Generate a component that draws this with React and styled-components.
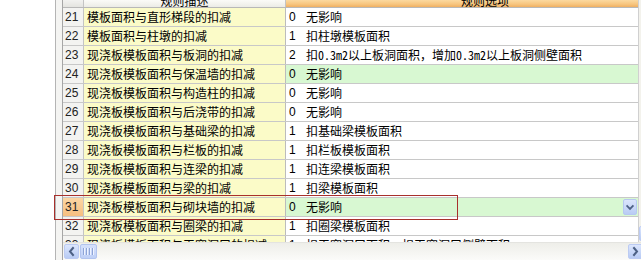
import React from "react";
import styled, { createGlobalStyle } from "styled-components";

const GlobalStyle = createGlobalStyle`
  html, body {
    margin: 0;
    padding: 0;
    background: #ffffff;
    overflow: hidden;
  }
  body {
    font-family: "Noto Sans Mono CJK SC", "Noto Sans CJK SC", "Liberation Sans", sans-serif;
    font-size: 12px;
    color: #000;
  }
`;

const rules = [
  { no: 21, desc: "模板面积与直形梯段的扣减", code: 0, text: "无影响" },
  { no: 22, desc: "模板面积与柱墩的扣减", code: 1, text: "扣柱墩模板面积" },
  { no: 23, desc: "现浇板模板面积与板洞的扣减", code: 2, text: "扣0.3m2以上板洞面积，增加0.3m2以上板洞侧壁面积" },
  { no: 24, desc: "现浇板模板面积与保温墙的扣减", code: 0, text: "无影响", changed: true },
  { no: 25, desc: "现浇板模板面积与构造柱的扣减", code: 0, text: "无影响" },
  { no: 26, desc: "现浇板模板面积与后浇带的扣减", code: 0, text: "无影响" },
  { no: 27, desc: "现浇板模板面积与基础梁的扣减", code: 1, text: "扣基础梁模板面积" },
  { no: 28, desc: "现浇板模板面积与栏板的扣减", code: 1, text: "扣栏板模板面积" },
  { no: 29, desc: "现浇板模板面积与连梁的扣减", code: 1, text: "扣连梁模板面积" },
  { no: 30, desc: "现浇板模板面积与梁的扣减", code: 1, text: "扣梁模板面积" },
  { no: 31, desc: "现浇板模板面积与砌块墙的扣减", code: 0, text: "无影响", changed: true, current: true },
  { no: 32, desc: "现浇板模板面积与圈梁的扣减", code: 1, text: "扣圈梁模板面积" },
  { no: 33, desc: "现浇板模板面积与天窗洞口的扣减", code: 1, text: "扣天窗洞口面积，扣天窗洞口侧壁面积" },
];

const App = () => {
  return (
    <>
      <GlobalStyle />
      <Page>
        <LeftPane />
        <Gutter />
        <Grid>
          <GridMain>
            <Table>
              <HeaderRow>
                <NoHead />
                <DescHead>
                  <HeadText>规则描述</HeadText>
                </DescHead>
                <ValueHead>
                  <HeadText $left>规则选项</HeadText>
                </ValueHead>
              </HeaderRow>
              <Rows>
                {rules.map((r) => (
                  <Row key={r.no}>
                    <NoCell $current={r.current}>{r.no}</NoCell>
                    <DescCell>{r.desc}</DescCell>
                    <ValueCell $changed={r.changed}>
                      <Code>{r.code}</Code>
                      <ValueText>{r.text}</ValueText>
                      {r.current && (
                        <DropButton>
                          <Chevron dir="down" />
                        </DropButton>
                      )}
                    </ValueCell>
                  </Row>
                ))}
              </Rows>
            </Table>
            <VScroll>
              <VTrack />
              <ScrollButton $v>
                <Chevron dir="down" />
              </ScrollButton>
            </VScroll>
          </GridMain>
          <HScroll>
            <ScrollButton>
              <Chevron dir="left" />
            </ScrollButton>
            <Thumb>
              <Grip />
              <Grip />
              <Grip />
              <Grip />
            </Thumb>
            <HTrack />
            <ScrollButton>
              <Chevron dir="right" />
            </ScrollButton>
            <Corner />
          </HScroll>
        </Grid>
        <Marker />
      </Page>
    </>
  );
};

const Chevron = ({ dir }) => {
  const paths = {
    down: "M3.5 5 L6.5 8 L9.5 5",
    left: "M8 3 L5 6.5 L8 10",
    right: "M5 3 L8 6.5 L5 10",
  };
  return (
    <svg width="13" height="13" viewBox="0 0 13 13">
      <path d={paths[dir]} fill="none" stroke="#4d6185" strokeWidth="2" strokeLinecap="square" />
    </svg>
  );
};

const Page = styled.div`
  position: relative;
  display: flex;
  width: 660px;
  height: 260px;
`;

const LeftPane = styled.div`
  width: 55px;
  flex-shrink: 0;
  background: #ffffff;
  border-right: 1px solid #b4b4b4;
`;

const Gutter = styled.div`
  width: 6px;
  flex-shrink: 0;
  background: #f4f4f2;
`;

const Grid = styled.div`
  flex: 1;
  display: flex;
  flex-direction: column;
  border-left: 1px solid #a6a6a6;
  overflow: hidden;
`;

const GridMain = styled.div`
  flex: 1;
  display: flex;
  overflow: hidden;
`;

const Table = styled.div`
  width: 575px;
  display: flex;
  flex-direction: column;
  overflow: hidden;
`;

const HeaderRow = styled.div`
  display: flex;
  height: 7px;
  flex-shrink: 0;
  border-bottom: 1px solid #b8b8b8;
  overflow: hidden;
`;

const NoHead = styled.div`
  width: 21px;
  box-sizing: border-box;
  border-right: 1px solid #c4c4c4;
  background: linear-gradient(#f2f2f0, #e4e4e0);
`;

const DescHead = styled.div`
  width: 202px;
  box-sizing: border-box;
  border-right: 1px solid #c4c4c4;
  background: linear-gradient(#fbfbf8, #ecece6);
  text-align: center;
`;

const ValueHead = styled.div`
  flex: 1;
  background: linear-gradient(#fbd9a0, #f7c57e 60%, #efb062);
`;

const HeadText = styled.div`
  line-height: 16px;
  margin-top: -7px;
  white-space: nowrap;
  padding-left: ${(p) => (p.$left ? "175px" : "0")};
`;

const Rows = styled.div`
  flex: 1;
  overflow: hidden;
`;

const Row = styled.div`
  display: flex;
  height: 19px;
  box-sizing: border-box;
  border-bottom: 1px solid #c8c8c8;
  line-height: 18px;
  white-space: nowrap;
`;

const NoCell = styled.div`
  width: 21px;
  box-sizing: border-box;
  padding-left: 2px;
  border-right: 1px solid #c4c4c4;
  font-family: "Liberation Sans", sans-serif;
  color: #222;
  background: ${(p) => (p.$current ? "linear-gradient(#fbd6a4, #f6bf80)" : "#f3f3f1")};
`;

const DescCell = styled.div`
  width: 202px;
  box-sizing: border-box;
  padding-left: 3px;
  border-right: 1px solid #bcbcbc;
  background: #fbfbc8;
  overflow: hidden;
`;

const ValueCell = styled.div`
  flex: 1;
  display: flex;
  align-items: center;
  padding-left: 3px;
  background: ${(p) => (p.$changed ? "#d8f8d2" : "#ffffff")};
  overflow: hidden;
`;

const Code = styled.span`
  width: 17px;
  flex-shrink: 0;
  font-family: "Liberation Sans", sans-serif;
`;

const ValueText = styled.span`
  flex: 1;
`;

const DropButton = styled.div`
  width: 14px;
  height: 16px;
  margin-right: 1px;
  box-sizing: border-box;
  display: flex;
  align-items: center;
  justify-content: center;
  border: 1px solid #b7c8f0;
  border-radius: 2px;
  background: linear-gradient(#dbe5fc, #b9ccf4);
`;

const VScroll = styled.div`
  width: 17px;
  flex-shrink: 0;
  display: flex;
  flex-direction: column;
  border-left: 1px solid #d0d0d0;
  background: #f3f2ec;
`;

const VTrack = styled.div`
  flex: 1;
`;

const HScroll = styled.div`
  display: flex;
  align-items: center;
  height: 17px;
  flex-shrink: 0;
  padding: 0 0 0 1px;
  background: linear-gradient(#eeeee9, #fbfbf9);
  border-top: 1px solid #e4e4e0;
`;

const ScrollButton = styled.div`
  width: ${(p) => (p.$v ? "16px" : "15px")};
  height: 15px;
  flex-shrink: 0;
  box-sizing: border-box;
  display: flex;
  align-items: center;
  justify-content: center;
  border: 1px solid #bccbf3;
  border-radius: 2px;
  background: linear-gradient(#dce6fd, #b8cbf4);
  margin-bottom: ${(p) => (p.$v ? "1px" : "0")};
`;

const Thumb = styled.div`
  width: 17px;
  height: 15px;
  margin-left: 1px;
  flex-shrink: 0;
  box-sizing: border-box;
  display: flex;
  align-items: center;
  justify-content: center;
  gap: 1px;
  border: 1px solid #b2c4ef;
  border-radius: 2px;
  background: linear-gradient(#d5e0fb, #bfd0f6);
`;

const Grip = styled.div`
  width: 1px;
  height: 7px;
  background: #8ea4d6;
  box-shadow: 1px 0 0 #eef3ff;
  margin-right: 1px;
`;

const HTrack = styled.div`
  flex: 1;
`;

const Corner = styled.div`
  width: 17px;
  height: 17px;
  flex-shrink: 0;
  background: #ece9d8;
`;

const Marker = styled.div`
  position: absolute;
  left: 54px;
  top: 195px;
  width: 404px;
  height: 25px;
  box-sizing: border-box;
  border: 1px solid #a8302c;
  pointer-events: none;
`;

export default App;
